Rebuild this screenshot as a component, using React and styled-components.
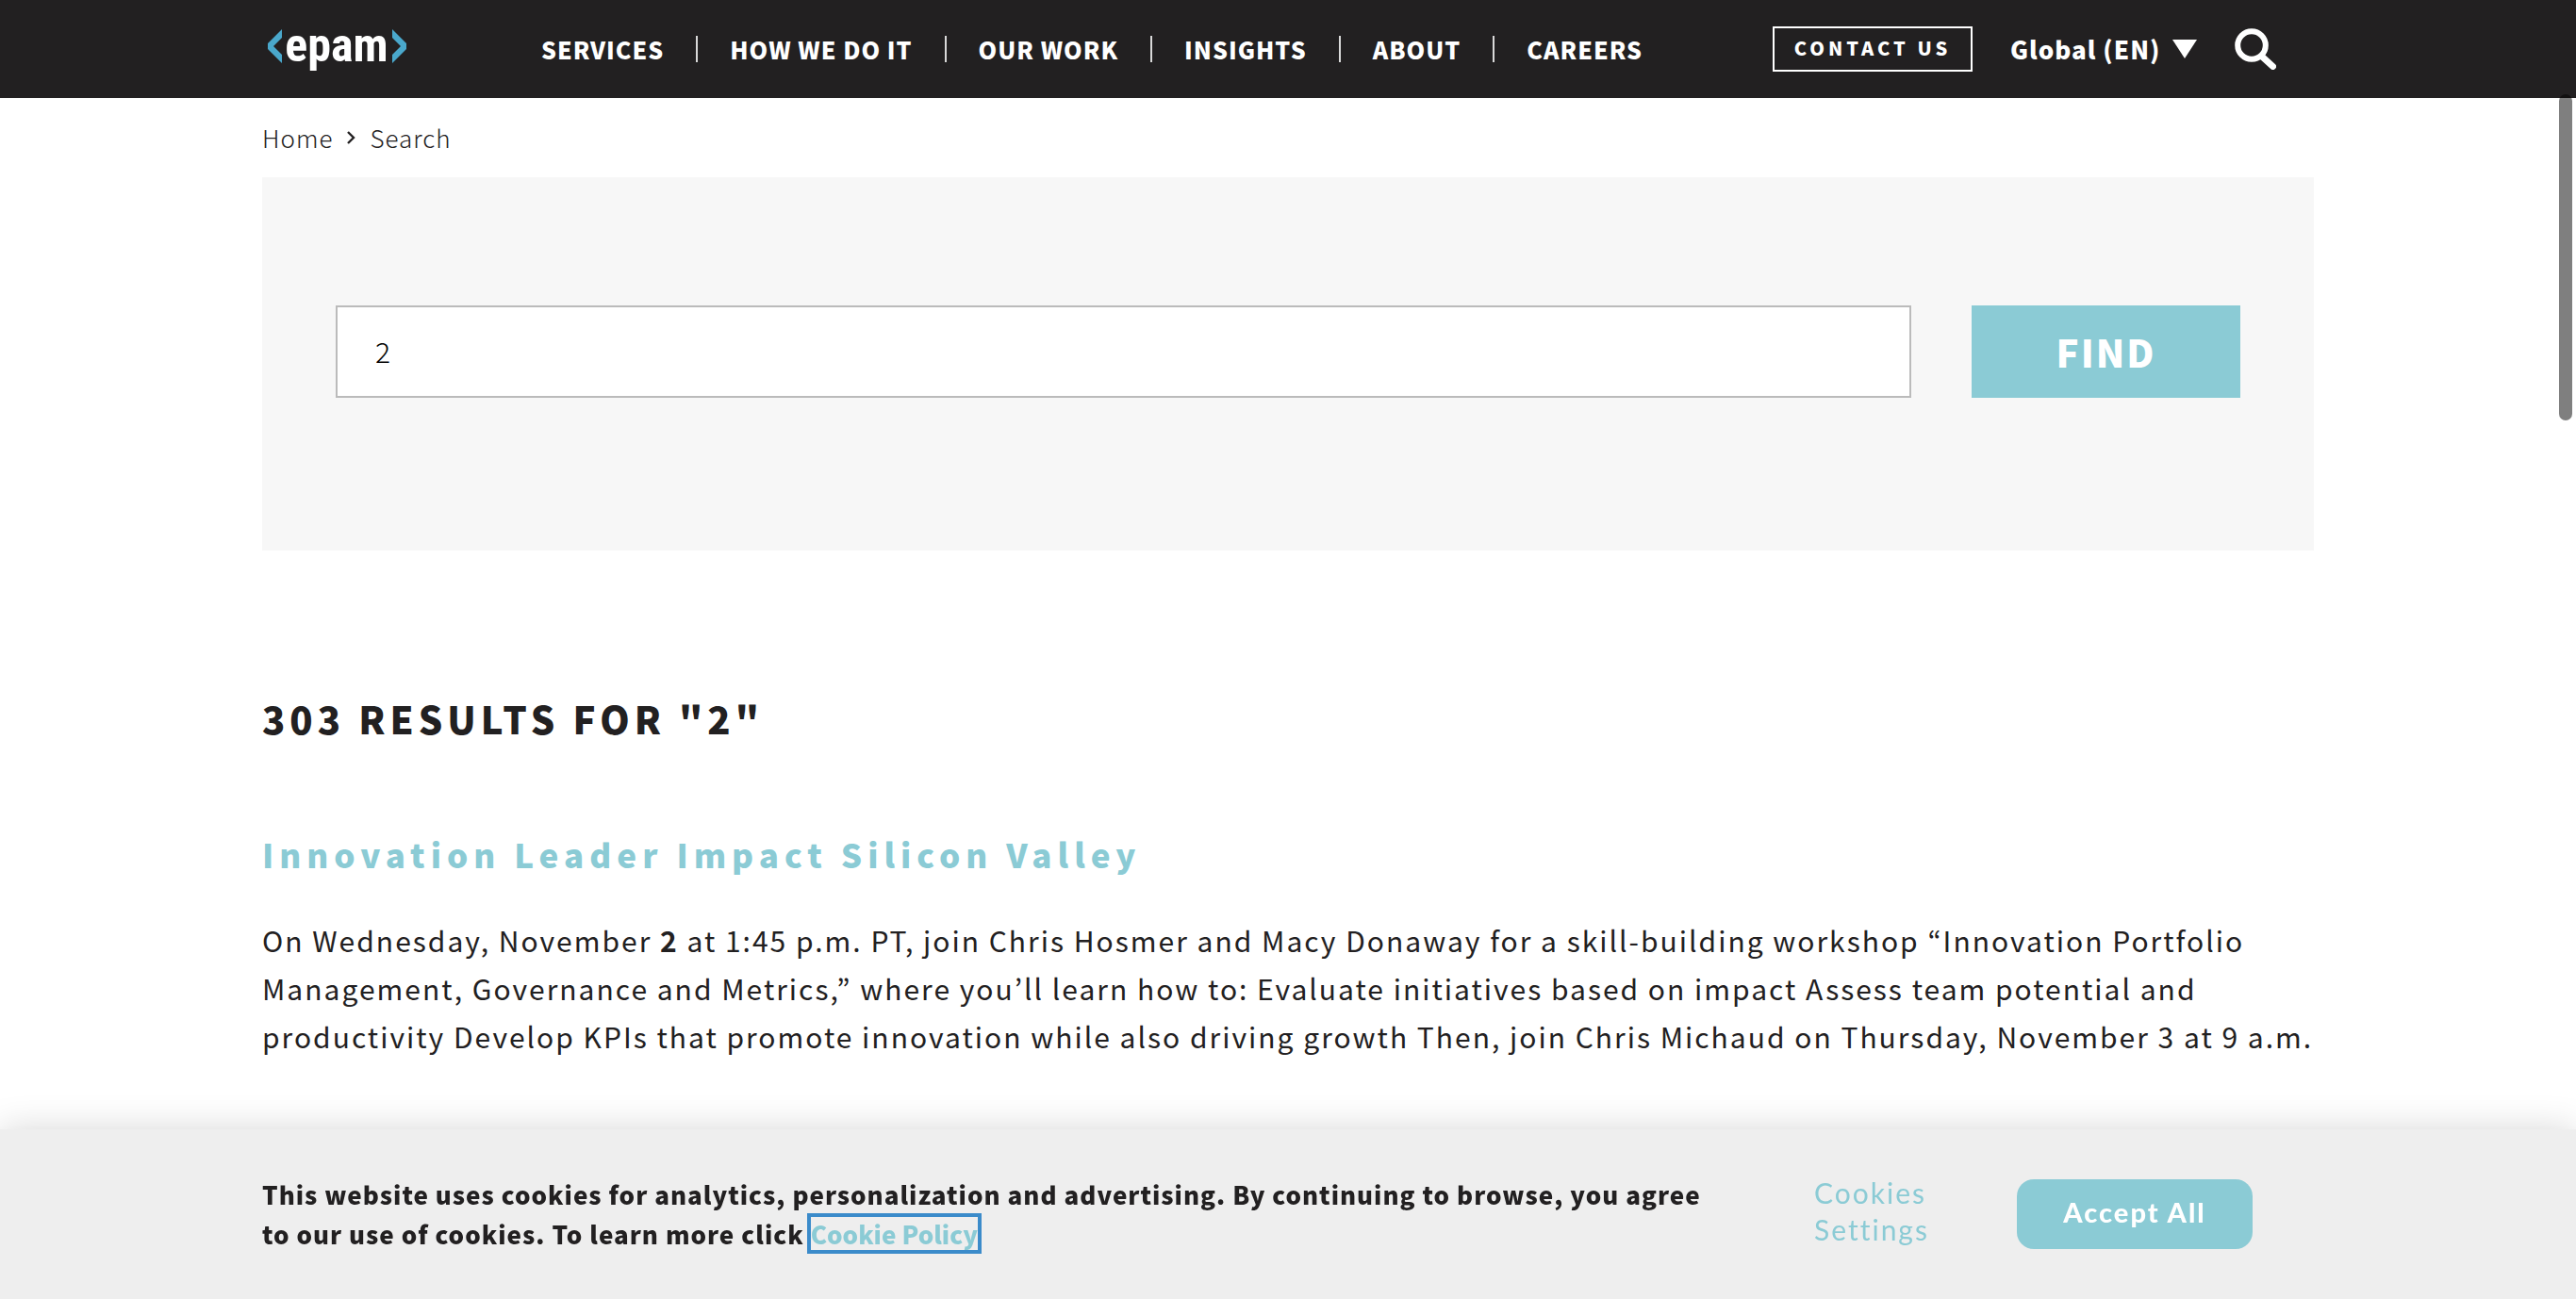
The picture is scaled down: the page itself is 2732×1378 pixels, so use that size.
import React, { useState } from "react";
import styled, { createGlobalStyle } from "styled-components";

const teal = "#8bcbd5";
const ink = "#222021";

const GlobalStyle = createGlobalStyle`
  *, *::before, *::after { box-sizing: border-box; }
  body {
    margin: 0;
    background: #fff;
    color: ${ink};
    font-family: "Noto Sans CJK JP", "Noto Sans", sans-serif;
  }
  h1, h2, p { margin: 0; }
  a { color: inherit; text-decoration: none; }
  button, input, select { font: inherit; color: inherit; border-radius: 0; margin: 0; }
`;

const Container = styled.div`
  width: 100%;
  max-width: 2176px;
  margin: 0 auto;
`;

const Header = styled.header`
  background: ${ink};
  color: #fff;
`;

const HeaderRow = styled(Container)`
  display: flex;
  align-items: center;
  height: 104px;
  padding: 0 40px 0 6px;
`;

const LogoLink = styled.a`
  display: block;
  width: 148px;
  height: 104px;
`;

const Nav = styled.nav`
  display: flex;
  align-items: center;
  margin-left: 108px;
  flex: 1;
`;

const NavLink = styled.a`
  padding: 0 34px;
  font-size: 25px;
  line-height: 28px;
  font-weight: 900;
  letter-spacing: 1px;
  white-space: nowrap;
  & + & { border-left: 2px solid #d9d9d9; }
`;

const ContactLink = styled.a`
  width: 212px;
  height: 48px;
  border: 2px solid #fff;
  text-align: center;
  font-size: 20px;
  line-height: 42px;
  font-weight: 900;
  letter-spacing: 4px;
  white-space: nowrap;
`;

const Locale = styled.label`
  display: flex;
  align-items: center;
  gap: 12px;
  margin-left: 40px;
`;

const LocaleSelect = styled.select`
  appearance: none;
  border: 0;
  padding: 0;
  background: transparent;
  font-size: 26px;
  line-height: 40px;
  font-weight: 900;
  letter-spacing: 1px;
`;

const SearchToggle = styled.button`
  display: flex;
  width: 44px;
  height: 44px;
  margin-left: 40px;
  padding: 0;
  border: 0;
  background: transparent;
`;

const Breadcrumbs = styled(Container).attrs({ as: "nav" })`
  display: flex;
  align-items: center;
  gap: 15px;
  height: 84px;
  font-size: 26px;
  line-height: 40px;
  font-weight: 300;
  letter-spacing: 1px;
`;

const SearchPanel = styled.form`
  display: flex;
  align-items: flex-start;
  gap: 64px;
  height: 396px;
  padding: 136px 78px;
  background: #f7f7f7;
`;

const SearchInput = styled.input`
  flex: 1;
  min-width: 0;
  height: 98px;
  padding: 0 40px 2px;
  border: 2px solid #bbb;
  background: #fff;
  color: #000;
  font-size: 30px;
  font-weight: 300;
  letter-spacing: 1px;
  outline: 0;
`;

const FindButton = styled.button`
  width: 285px;
  height: 98px;
  padding: 0;
  border: 0;
  background: ${teal};
  color: #fff;
  font-size: 40px;
  line-height: 60px;
  font-weight: 900;
  letter-spacing: 2px;
`;

const ResultCount = styled.h1`
  margin-top: 148px;
  font-size: 40px;
  line-height: 60px;
  font-weight: 900;
  letter-spacing: 5px;
`;

const Result = styled.article`
  margin-top: 84px;
`;

const ResultTitle = styled.h2`
  color: ${teal};
  font-size: 35px;
  line-height: 60px;
  font-weight: 900;
  letter-spacing: 6px;
`;

const ResultText = styled.p`
  margin-top: 36px;
  font-size: 30px;
  line-height: 51px;
  letter-spacing: 2px;
`;

const CookieBar = styled.section`
  position: fixed;
  left: 0;
  right: 0;
  bottom: 0;
  background: #eee;
  box-shadow: 0 0 36px rgba(0, 0, 0, 0.16);
`;

const CookieRow = styled(Container)`
  display: flex;
  align-items: flex-start;
  height: 180px;
  padding: 48px 65px 0 0;
`;

const CookieText = styled.p`
  width: 1540px;
  font-size: 26px;
  line-height: 42px;
  font-weight: 900;
  letter-spacing: 1px;
`;

const PolicyLink = styled.a`
  display: inline-block;
  line-height: 35px;
  color: ${teal};
  letter-spacing: 0;
  outline: 4px solid #3b8bca;
`;

const SettingsButton = styled.button`
  width: 130px;
  margin-left: auto;
  padding: 0;
  border: 0;
  background: transparent;
  color: ${teal};
  font-family: Lato, sans-serif;
  font-size: 30px;
  line-height: 39px;
  letter-spacing: 2px;
  text-align: left;
`;

const AcceptButton = styled.button`
  width: 250px;
  height: 74px;
  margin: 5px 0 0 85px;
  padding: 0 0 4px;
  border: 0;
  border-radius: 18px;
  background: ${teal};
  color: #fff;
  font-family: Lato, sans-serif;
  font-size: 29px;
  line-height: 36px;
  font-weight: 900;
  letter-spacing: 2px;
`;

const ScrollThumb = styled.div`
  position: fixed;
  z-index: 2;
  top: 100px;
  right: 4px;
  width: 14px;
  height: 346px;
  border-radius: 7px;
  background: rgba(0, 0, 0, 0.5);
`;

const Logo = () => (
  <svg width="148" height="104" viewBox="0 0 148 104" aria-hidden="true">
    <path d="M15 31V40L6 49L15 58V67L0 52V46Z" fill="#4aa8cc" />
    <path d="M132 31V40L141 49L132 58V67L147 52V46Z" fill="#4aa8cc" />
    <text
      x="73"
      y="65"
      textAnchor="middle"
      fill="#fff"
      fontFamily="'Roboto Condensed', Roboto, 'Liberation Sans', sans-serif"
      fontWeight="700"
      fontSize="50"
    >
      epam
    </text>
  </svg>
);

const SearchIcon = () => (
  <svg width="44" height="44" viewBox="0 0 44 44" fill="none" stroke="#fff" aria-hidden="true">
    <circle cx="18" cy="18" r="14.8" strokeWidth="6" />
    <path d="M29 30L40.5 40.5" strokeWidth="7" strokeLinecap="round" />
  </svg>
);

const DownTriangle = () => (
  <svg width="26" height="20" viewBox="0 0 26 20" aria-hidden="true">
    <path d="M0 0H26L13 20Z" fill="#fff" />
  </svg>
);

const Chevron = () => (
  <svg width="9" height="14" viewBox="0 0 9 14" fill="none" stroke={ink} strokeWidth="2.4" aria-hidden="true">
    <path d="M1 1L7 7L1 13" />
  </svg>
);

const links = ["SERVICES", "HOW WE DO IT", "OUR WORK", "INSIGHTS", "ABOUT", "CAREERS"];

export default function App() {
  const [query, setQuery] = useState("2");
  return (
    <>
      <GlobalStyle />
      <Header>
        <HeaderRow>
          <LogoLink href="#" aria-label="EPAM">
            <Logo />
          </LogoLink>
          <Nav>
            {links.map((label) => (
              <NavLink key={label} href="#">{label}</NavLink>
            ))}
          </Nav>
          <ContactLink href="#">CONTACT US</ContactLink>
          <Locale>
            <LocaleSelect aria-label="Location">
              <option>Global (EN)</option>
            </LocaleSelect>
            <DownTriangle />
          </Locale>
          <SearchToggle type="button" aria-label="Search">
            <SearchIcon />
          </SearchToggle>
        </HeaderRow>
      </Header>
      <Breadcrumbs aria-label="Breadcrumb">
        <a href="#">Home</a>
        <Chevron />
        <a href="#">Search</a>
      </Breadcrumbs>
      <Container as="main">
        <SearchPanel onSubmit={(e) => e.preventDefault()}>
          <SearchInput
            aria-label="Search query"
            value={query}
            onChange={(e) => setQuery(e.target.value)}
          />
          <FindButton type="submit">FIND</FindButton>
        </SearchPanel>
        <ResultCount>303 RESULTS FOR "2"</ResultCount>
        <Result>
          <ResultTitle>
            <a href="#">Innovation Leader Impact Silicon Valley</a>
          </ResultTitle>
          <ResultText>
            On Wednesday, November <b>2</b> at 1:45 p.m. PT, join Chris Hosmer and Macy Donaway for a
            skill-building workshop “Innovation Portfolio Management, Governance and Metrics,” where
            you’ll learn how to: Evaluate initiatives based on impact Assess team potential and
            productivity Develop KPIs that promote innovation while also driving growth Then, join
            Chris Michaud on Thursday, November 3 at 9 a.m.
          </ResultText>
        </Result>
      </Container>
      <CookieBar aria-label="Cookie notice">
        <CookieRow>
          <CookieText>
            This website uses cookies for analytics, personalization and advertising. By continuing
            to browse, you agree to our use of cookies. To learn more click{" "}
            <PolicyLink href="#">Cookie Policy</PolicyLink>
          </CookieText>
          <SettingsButton type="button">Cookies Settings</SettingsButton>
          <AcceptButton type="button">Accept All</AcceptButton>
        </CookieRow>
      </CookieBar>
      <ScrollThumb aria-hidden="true" />
    </>
  );
}
